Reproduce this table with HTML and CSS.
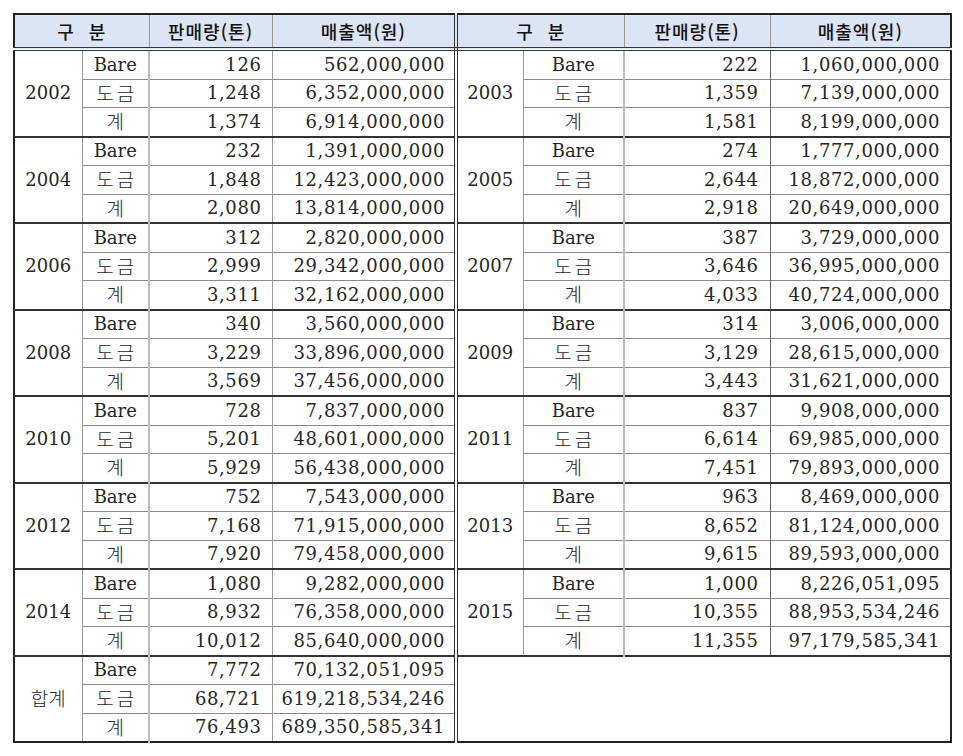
FILE: index.html
```html
<!DOCTYPE html>
<html lang="ko">
<head>
<meta charset="utf-8">
<title>판매량</title>
<link rel="stylesheet" href="styles.css">
</head>
<body>
<table class="sales">
  <colgroup>
    <col class="c-year-l"><col class="c-kind-l"><col class="c-qty-l"><col class="c-amt-l">
    <col class="c-year-r"><col class="c-kind-r"><col class="c-qty-r"><col class="c-amt-r">
  </colgroup>
  <thead>
    <tr>
      <th colspan="2" class="gubun">구 분</th><th>판매량(톤)</th><th class="mid">매출액(원)</th>
      <th colspan="2" class="split gubun">구 분</th><th>판매량(톤)</th><th>매출액(원)</th>
    </tr>
  </thead>
  <tbody id="body"></tbody>
</table>
<script src="app.js"></script>
</body>
</html>
```

FILE: app.js
```js
const data = [
  ["2002", [["126","562,000,000"],["1,248","6,352,000,000"],["1,374","6,914,000,000"]],
   "2003", [["222","1,060,000,000"],["1,359","7,139,000,000"],["1,581","8,199,000,000"]]],
  ["2004", [["232","1,391,000,000"],["1,848","12,423,000,000"],["2,080","13,814,000,000"]],
   "2005", [["274","1,777,000,000"],["2,644","18,872,000,000"],["2,918","20,649,000,000"]]],
  ["2006", [["312","2,820,000,000"],["2,999","29,342,000,000"],["3,311","32,162,000,000"]],
   "2007", [["387","3,729,000,000"],["3,646","36,995,000,000"],["4,033","40,724,000,000"]]],
  ["2008", [["340","3,560,000,000"],["3,229","33,896,000,000"],["3,569","37,456,000,000"]],
   "2009", [["314","3,006,000,000"],["3,129","28,615,000,000"],["3,443","31,621,000,000"]]],
  ["2010", [["728","7,837,000,000"],["5,201","48,601,000,000"],["5,929","56,438,000,000"]],
   "2011", [["837","9,908,000,000"],["6,614","69,985,000,000"],["7,451","79,893,000,000"]]],
  ["2012", [["752","7,543,000,000"],["7,168","71,915,000,000"],["7,920","79,458,000,000"]],
   "2013", [["963","8,469,000,000"],["8,652","81,124,000,000"],["9,615","89,593,000,000"]]],
  ["2014", [["1,080","9,282,000,000"],["8,932","76,358,000,000"],["10,012","85,640,000,000"]],
   "2015", [["1,000","8,226,051,095"],["10,355","88,953,534,246"],["11,355","97,179,585,341"]]],
  ["합계", [["7,772","70,132,051,095"],["68,721","619,218,534,246"],["76,493","689,350,585,341"]],
   null, null]
];
const kinds = ['<span class="lat">Bare</span>', '<span class="ko sp">도금</span>', '<span class="ko">계</span>'];
const body = document.getElementById("body");
let html = "";
data.forEach(([yl, rl, yr, rr]) => {
  for (let i = 0; i < 3; i++) {
    html += '<tr class="' + (i === 0 ? "first" : "") + '">';
    if (i === 0) {
      const lbl = /\d/.test(yl) ? yl : '<span class="ko">' + yl + '</span>';
      html += '<td rowspan="3" class="year">' + lbl + '</td>';
    }
    html += '<td class="kind">' + kinds[i] + '</td>';
    html += '<td class="num qty">' + rl[i][0] + '</td>';
    html += '<td class="num amt mid">' + rl[i][1] + '</td>';
    if (yr) {
      if (i === 0) html += '<td rowspan="3" class="year split">' + yr + '</td>';
      html += '<td class="kind kind-r">' + kinds[i] + '</td>';
      html += '<td class="num qty-r">' + rr[i][0] + '</td>';
      html += '<td class="num amt-r">' + rr[i][1] + '</td>';
    } else if (i === 0) {
      html += '<td rowspan="3" colspan="4" class="empty split"></td>';
    }
    html += '</tr>';
  }
});
body.innerHTML = html;
```

FILE: styles.css
```css
html, body {
  margin: 0;
  padding: 0;
  background: #ffffff;
}

body {
  padding: 13px 0 0 13px;
  font-family: "DejaVu Serif", "Liberation Serif", "Noto Sans CJK KR", serif;
  color: #262626;
}

.sales {
  border-collapse: collapse;
  table-layout: fixed;
  width: 937px;
  border: 2px solid #222;
}

.c-year-l { width: 68px; }
.c-kind-l { width: 67px; }
.c-qty-l { width: 123px; }
.c-amt-l { width: 184px; }
.c-year-r { width: 67px; }
.c-kind-r { width: 101px; }
.c-qty-r { width: 146px; }
.c-amt-r { width: 181px; }

.sales th {
  height: 32px;
  padding: 0;
  background: #dce4f6;
  font-family: "Noto Sans CJK KR", sans-serif;
  font-weight: 500;
  font-size: 18px;
  letter-spacing: 1px;
  color: #111;
  border-bottom: 4px double #333;
  border-left: 1px solid #999;
  border-right: 1px solid #999;
  text-align: center;
  vertical-align: middle;
  line-height: 1;
}

.sales th.gubun {
  word-spacing: 8px;
}

.sales td {
  height: 27.5px;
  padding: 0;
  font-size: 18px;
  line-height: 1;
  vertical-align: middle;
  border-top: 1px solid #8a8a8a;
  border-left: 1px solid #aaa;
  white-space: nowrap;
}

.sales tr.first td {
  border-top: 2px solid #333;
}

.sales tbody tr:first-child td {
  border-top: 4px double #333;
}

.sales .mid {
  border-right: 4px double #333;
}

.sales .split {
  border-left: 4px double #333;
}

.year {
  text-align: center;
  border-right: 1px solid #999;
}

.kind {
  text-align: center;
  border-left: 1px solid #999;
}

.num {
  text-align: right;
  letter-spacing: 0.6px;
}

.qty, .qty-r {
  padding-right: 10px !important;
  border-left: 2px solid #bbb !important;
}

.amt, .amt-r {
  padding-right: 9px !important;
  border-left: 1px solid #999 !important;
}

.amt-r {
  padding-right: 10px !important;
  border-left: 1px solid #666 !important;
}

.qty-r {
  padding-right: 11px !important;
}

.kind-r {
  border-left: 1px solid #555;
}

.lat {
  font-family: "DejaVu Serif", serif;
}

.ko {
  font-family: "Noto Sans CJK KR", sans-serif;
  font-weight: 300;
  font-size: 19px;
}

.ko.sp {
  letter-spacing: 3px;
  margin-right: -3px;
}

.empty {
  background: #fff;
}
```
